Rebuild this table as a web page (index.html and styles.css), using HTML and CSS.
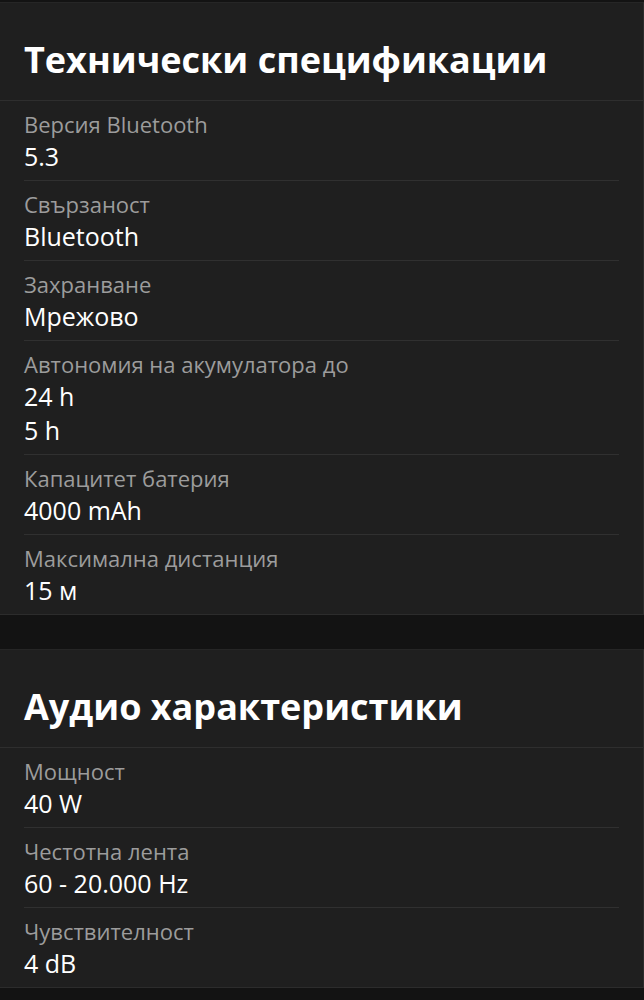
FILE: index.html
```html
<!DOCTYPE html>
<html lang="bg">
<head>
<meta charset="utf-8">
<link rel="stylesheet" href="styles.css">
</head>
<body>
<div class="page">
  <section class="card">
    <h2 class="card-title">Технически спецификации</h2>
    <div class="rows">
      <div class="row"><div class="label">Версия Bluetooth</div><div class="value">5.3</div></div>
      <div class="row"><div class="label">Свързаност</div><div class="value">Bluetooth</div></div>
      <div class="row"><div class="label">Захранване</div><div class="value">Мрежово</div></div>
      <div class="row"><div class="label">Автономия на акумулатора до</div><div class="value">24 h</div><div class="value">5 h</div></div>
      <div class="row"><div class="label">Капацитет батерия</div><div class="value">4000 mAh</div></div>
      <div class="row"><div class="label">Максимална дистанция</div><div class="value">15 м</div></div>
    </div>
  </section>
  <section class="card">
    <h2 class="card-title">Аудио характеристики</h2>
    <div class="rows">
      <div class="row"><div class="label">Мощност</div><div class="value">40 W</div></div>
      <div class="row"><div class="label">Честотна лента</div><div class="value">60 - 20.000 Hz</div></div>
      <div class="row"><div class="label">Чувствителност</div><div class="value">4 dB</div></div>
    </div>
  </section>
</div>
</body>
</html>
```
FILE: styles.css
```css
html, body {
  margin: 0;
  padding: 0;
  background: #131313;
}
body {
  font-family: "Open Sans", "Noto Sans", sans-serif;
  color: #fff;
}
.page {
  display: flex;
  flex-direction: column;
  gap: 34px;
  padding-top: 2px;
}
.card {
  width: 643px;
  background: #1f1f1f;
  border-top: 1px solid #262626;
  border-right: 1px solid #2c2c2c;
  border-bottom: 1px solid #2c2c2c;
}
.card-title {
  margin: 0;
  padding: 16px 24px 0;
  height: 98px;
  display: flex;
  align-items: center;
  box-sizing: border-box;
  font-size: 36px;
  font-weight: 700;
  line-height: 1;
  border-bottom: 1px solid #2e2e2e;
}
.rows {
  padding: 0 24px;
}
.row {
  padding: 8px 0 7px;
  border-bottom: 1px solid #303030;
}
.row:last-child {
  border-bottom: none;
}
.label {
  font-size: 22px;
  line-height: 30px;
  color: #9c9c9c;
}
.value {
  font-size: 25px;
  line-height: 34px;
  color: #fff;
}
```
